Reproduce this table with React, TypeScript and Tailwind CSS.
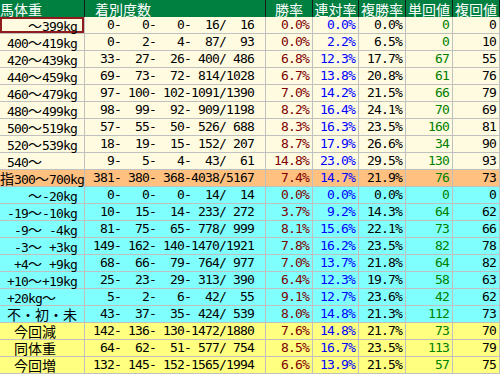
type Row = {
  label: string;
  rec: [number, number, number, number, number];
  win: string;
  ren: string;
  fuku: string;
  tan: number;
  fukuKai: number;
  bg: string;
};

const CREAM = 'bg-[#fffbe1]';
const ORANGE = 'bg-[#ffc080]';
const CYAN = 'bg-[#80ffff]';
const YELLOW = 'bg-[#ffff80]';

const rows: Row[] = [
  { label: '    ～399kg', rec: [0, 0, 0, 16, 16], win: '0.0%', ren: '0.0%', fuku: '0.0%', tan: 0, fukuKai: 0, bg: CREAM },
  { label: ' 400～419kg', rec: [0, 2, 4, 87, 93], win: '0.0%', ren: '2.2%', fuku: '6.5%', tan: 0, fukuKai: 10, bg: CREAM },
  { label: ' 420～439kg', rec: [33, 27, 26, 400, 486], win: '6.8%', ren: '12.3%', fuku: '17.7%', tan: 67, fukuKai: 55, bg: CREAM },
  { label: ' 440～459kg', rec: [69, 73, 72, 814, 1028], win: '6.7%', ren: '13.8%', fuku: '20.8%', tan: 61, fukuKai: 76, bg: CREAM },
  { label: ' 460～479kg', rec: [97, 100, 102, 1091, 1390], win: '7.0%', ren: '14.2%', fuku: '21.5%', tan: 66, fukuKai: 79, bg: CREAM },
  { label: ' 480～499kg', rec: [98, 99, 92, 909, 1198], win: '8.2%', ren: '16.4%', fuku: '24.1%', tan: 70, fukuKai: 69, bg: CREAM },
  { label: ' 500～519kg', rec: [57, 55, 50, 526, 688], win: '8.3%', ren: '16.3%', fuku: '23.5%', tan: 160, fukuKai: 81, bg: CREAM },
  { label: ' 520～539kg', rec: [18, 19, 15, 152, 207], win: '8.7%', ren: '17.9%', fuku: '26.6%', tan: 34, fukuKai: 90, bg: CREAM },
  { label: ' 540～', rec: [9, 5, 4, 43, 61], win: '14.8%', ren: '23.0%', fuku: '29.5%', tan: 130, fukuKai: 93, bg: CREAM },
  { label: '指300～700kg', rec: [381, 380, 368, 4038, 5167], win: '7.4%', ren: '14.7%', fuku: '21.9%', tan: 76, fukuKai: 73, bg: ORANGE },
  { label: '    ～-20kg', rec: [0, 0, 0, 14, 14], win: '0.0%', ren: '0.0%', fuku: '0.0%', tan: 0, fukuKai: 0, bg: CYAN },
  { label: ' -19～-10kg', rec: [10, 15, 14, 233, 272], win: '3.7%', ren: '9.2%', fuku: '14.3%', tan: 64, fukuKai: 62, bg: CYAN },
  { label: '  -9～ -4kg', rec: [81, 75, 65, 778, 999], win: '8.1%', ren: '15.6%', fuku: '22.1%', tan: 73, fukuKai: 66, bg: CYAN },
  { label: '  -3～ +3kg', rec: [149, 162, 140, 1470, 1921], win: '7.8%', ren: '16.2%', fuku: '23.5%', tan: 82, fukuKai: 78, bg: CYAN },
  { label: '  +4～ +9kg', rec: [68, 66, 79, 764, 977], win: '7.0%', ren: '13.7%', fuku: '21.8%', tan: 64, fukuKai: 82, bg: CYAN },
  { label: ' +10～+19kg', rec: [25, 23, 29, 313, 390], win: '6.4%', ren: '12.3%', fuku: '19.7%', tan: 58, fukuKai: 63, bg: CYAN },
  { label: ' +20kg～', rec: [5, 2, 6, 42, 55], win: '9.1%', ren: '12.7%', fuku: '23.6%', tan: 42, fukuKai: 62, bg: CYAN },
  { label: ' 不・初・未', rec: [43, 37, 35, 424, 539], win: '8.0%', ren: '14.8%', fuku: '21.3%', tan: 112, fukuKai: 73, bg: CYAN },
  { label: '  今回減', rec: [142, 136, 130, 1472, 1880], win: '7.6%', ren: '14.8%', fuku: '21.7%', tan: 73, fukuKai: 70, bg: YELLOW },
  { label: '  同体重', rec: [64, 62, 51, 577, 754], win: '8.5%', ren: '16.7%', fuku: '23.5%', tan: 113, fukuKai: 79, bg: YELLOW },
  { label: '  今回増', rec: [132, 145, 152, 1565, 1994], win: '6.6%', ren: '13.9%', fuku: '21.5%', tan: 57, fukuKai: 75, bg: YELLOW },
];

const pad = (n: number, w: number) => String(n).padStart(w, ' ');

// half-width runs in mono at 7px pitch, full-width runs at 14px
function Mixed({ text }: { text: string }) {
  const parts = text.match(/[\x00-\x7f]+|[^\x00-\x7f]+/g) ?? [];
  return (
    <>
      {parts.map((p, i) =>
        /^[\x00-\x7f]/.test(p) ? (
          <span key={i} className="tracking-[-0.83px]">{p}</span>
        ) : (
          <span key={i} className="inline-block h-[16px] leading-[16px] text-[14px] font-['Noto_Sans_CJK_JP',sans-serif]">{p}</span>
        )
      )}
    </>
  );
}

const cell = 'h-[17px] border-r border-b border-[#c0c0c0] text-[13px] leading-[16px] whitespace-pre';
const num = `${cell} text-right pr-[3px] tracking-[-0.83px]`;
const head = "flex h-[17px] items-center border-r border-[#1a1a1a] bg-[#008040] text-[14px] text-white whitespace-nowrap font-['Noto_Sans_CJK_JP',sans-serif]";

export default function App() {
  return (
    <div className="w-[502px] h-[375px] bg-white font-['DejaVu_Sans_Mono','Noto_Sans_CJK_JP',monospace] text-black">
      <div className="grid w-[500px] grid-cols-[85px_181px_47px_46px_47px_47px_47px]">
        <div className={head}><span className="leading-[16px]">馬体重</span></div>
        <div className={`${head} pl-[10px]`}><span className="leading-[16px]">着別度数</span></div>
        <div className={`${head} justify-center`}><span className="leading-[16px]">勝率</span></div>
        <div className={`${head} justify-center`}><span className="leading-[16px]">連対率</span></div>
        <div className={`${head} justify-center`}><span className="leading-[16px]">複勝率</span></div>
        <div className={`${head} justify-center`}><span className="leading-[16px]">単回値</span></div>
        <div className={`${head} justify-center`}><span className="leading-[16px]">複回値</span></div>

        {rows.map((r, i) => {
          const [a, b, c, d, t] = r.rec;
          const rec = `${pad(a, 3)}-${pad(b, 4)}-${pad(c, 4)}-${pad(d, 4)}/${pad(t, 4)}`;
          return (
            <div key={i} className="contents">
              <div className={`${cell} ${r.bg} ${i === 0 ? 'shadow-[inset_0_0_0_2px_#8e1c1c]' : ''}`}>
                <Mixed text={r.label} />
              </div>
              <div className={`${num} ${r.bg} pr-[11px]`}>{rec}</div>
              <div className={`${num} ${r.bg} text-[#800000]`}>{r.win}</div>
              <div className={`${num} ${r.bg} text-[#0000ff]`}>{r.ren}</div>
              <div className={`${num} ${r.bg}`}>{r.fuku}</div>
              <div className={`${num} ${r.bg} text-[#008000]`}>{r.tan}</div>
              <div className={`${num} ${r.bg}`}>{r.fukuKai}</div>
            </div>
          );
        })}
      </div>
    </div>
  );
}
